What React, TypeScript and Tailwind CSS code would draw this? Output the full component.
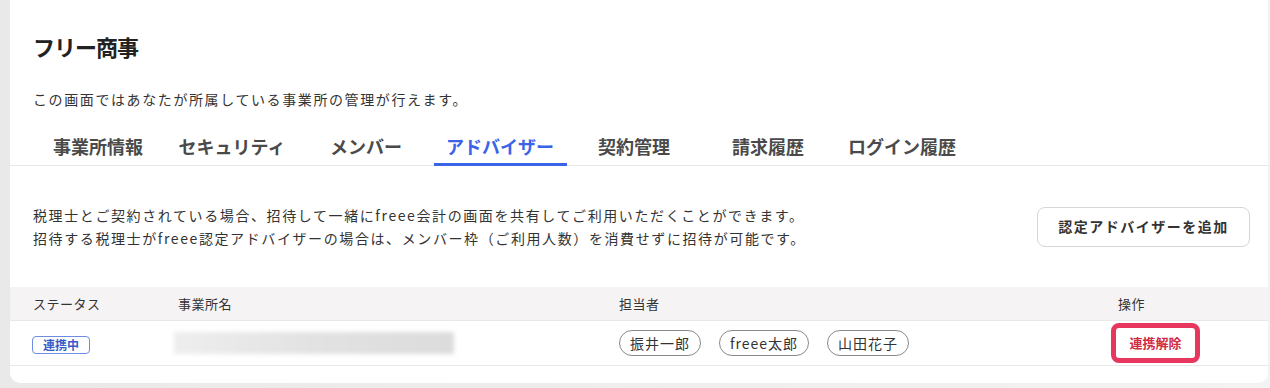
const tabs = ['事業所情報', 'セキュリティ', 'メンバー', 'アドバイザー', '契約管理', '請求履歴', 'ログイン履歴'];
const members = ['振井一郎', 'freee太郎', '山田花子'];

const App = () => {
  return (
    <div
      className="h-[388px] w-full overflow-hidden bg-gradient-to-r from-[#e9e9e9] to-[#f3f3f3] text-[#333]"
      style={{ fontFamily: '"Noto Sans CJK JP", "Noto Sans", sans-serif' }}
    >
      <div className="ml-[10px] mr-[2px] h-[383px] rounded-b-[10px] bg-white">
        {/* ヘッダー */}
        <div className="px-[23px] pt-[28px]">
          <h1 className="text-[22px] font-bold leading-[36px] tracking-[-1px] text-[#222]">フリー商事</h1>
          <p className="mt-[25px] text-[14px] leading-[20px] tracking-[1.6px] text-[#333]">
            この画面ではあなたが所属している事業所の管理が行えます。
          </p>
        </div>

        {/* タブ */}
        <div className="mt-[17px] flex border-b border-[#e6e6e6] pl-[21px]">
          {tabs.map((t) => {
            const active = t === 'アドバイザー';
            return (
              <div key={t} className="relative h-[39px] w-[134px] pt-[7px] text-center">
                <span
                  className={`text-[18px] font-bold leading-[26px] ${active ? 'text-[#3b63e8]' : 'text-[#4a4a4a]'}`}
                >
                  {t}
                </span>
                {active && <span className="absolute bottom-[-1px] left-[1px] right-0 h-[3px] bg-[#3b63e8]" />}
              </div>
            );
          })}
        </div>

        {/* 説明 */}
        <div className="flex h-[121px] items-center justify-between pl-[23px] pr-[18px]">
          <div className="text-[14px] leading-[23px] tracking-[1.6px] text-[#333]">
            <p>税理士とご契約されている場合、招待して一緒にfreee会計の画面を共有してご利用いただくことができます。</p>
            <p>招待する税理士がfreee認定アドバイザーの場合は、メンバー枠（ご利用人数）を消費せずに招待が可能です。</p>
          </div>
          <button className="h-[40px] w-[213px] rounded-[8px] border border-[#d6d6d6] bg-white text-[14px] font-bold tracking-[1.5px] text-[#333]">
            認定アドバイザーを追加
          </button>
        </div>

        {/* テーブル */}
        <div className="grid h-[34px] grid-cols-[145px_441px_499px_1fr] items-center border-b border-[#e8e8e8] bg-[#f5f3f4] pl-[23px] text-[13px] tracking-[0.5px] text-[#333]">
          <div>ステータス</div>
          <div>事業所名</div>
          <div>担当者</div>
          <div>操作</div>
        </div>
        <div className="grid h-[45px] grid-cols-[145px_441px_499px_1fr] items-center border-b border-[#e8e8e8] pl-[22px]">
          <div>
            <span className="inline-flex h-[18px] w-[58px] items-center justify-center rounded-[4px] border border-[#6d8ce6] text-[12px] font-bold text-[#3a5cc8]">
              連携中
            </span>
          </div>
          <div className="-ml-[3px]">
            <div className="h-[22px] w-[280px] bg-gradient-to-r from-[#eeeeee] via-[#e2e2e2] to-[#dcdcdc] blur-[2px]" />
          </div>
          <div className="ml-[1px] flex gap-[18px]">
            {members.map((m) => (
              <span
                key={m}
                className="inline-flex h-[26px] items-center rounded-full border border-[#8a8a8a] px-[10px] text-[14px] tracking-[1px] text-[#333]"
              >
                {m}
              </span>
            ))}
          </div>
          <div className="-ml-[6px]">
            <span className="inline-flex h-[40px] w-[89px] items-center justify-center rounded-[8px] border-[5px] border-[#e8375f] bg-white text-[13px] font-bold text-[#d02a44]">
              連携解除
            </span>
          </div>
        </div>
      </div>
    </div>
  );
};

export default App;
